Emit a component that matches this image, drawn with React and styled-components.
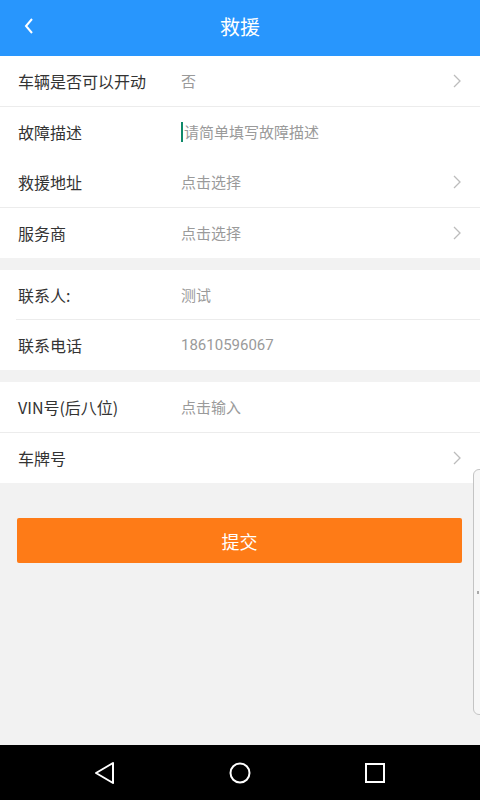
import styled, { createGlobalStyle } from "styled-components";

const Global = createGlobalStyle`
  html, body { margin: 0; padding: 0; }
  body { font-family: "Noto Sans CJK SC", "Noto Sans", sans-serif; }
  * { box-sizing: border-box; }
`;

const Screen = styled.div`
  width: 480px;
  height: 800px;
  display: flex;
  flex-direction: column;
  background: #f2f2f2;
  position: relative;
  overflow: hidden;
`;

const Header = styled.header`
  height: 56px;
  padding-bottom: 4px;
  background: #2896fd;
  display: flex;
  align-items: center;
  justify-content: center;
  position: relative;
  color: #fff;
  font-size: 20px;
`;

const Back = styled.div`
  position: absolute;
  left: 23px;
  top: 16px;
  width: 16px;
  height: 20px;
  display: flex;
  align-items: center;
`;

const Body = styled.main`
  flex: 1;
  display: flex;
  flex-direction: column;
`;

const Group = styled.section`
  background: #fff;
  margin-bottom: ${(p) => (p.$last ? "0" : "12px")};
`;

const Row = styled.div`
  box-sizing: content-box;
  height: 50px;
  display: flex;
  align-items: center;
  padding: 0 18px;
  position: relative;
  border-bottom: ${(p) => (p.$line ? "1px solid #ececec" : "none")};
  ${(p) =>
    p.$inset &&
    `&:after { content: ""; position: absolute; left: 16px; right: 0; bottom: 0; height: 1px; background: #ececec; }`}
`;

const Label = styled.div`
  width: 163px;
  font-size: 16px;
  color: #333;
  padding-bottom: 1px;
`;

const Value = styled.div`
  flex: 1;
  font-family: Roboto, "Noto Sans CJK SC", sans-serif;
  font-size: 15px;
  color: #9a9a9a;
  display: flex;
  align-items: center;
  padding-bottom: 1px;
`;

const Caret = styled.span`
  display: inline-block;
  width: 2px;
  height: 20px;
  background: #108a6a;
  margin-right: 1px;
`;

const Arrow = styled.div`
  width: 10px;
  display: flex;
  justify-content: center;
`;

const Submit = styled.button`
  margin: 35px 18px 0 17px;
  height: 45px;
  border: none;
  border-radius: 2px;
  background: #fe7b17;
  color: #fff;
  font-size: 18px;
  font-family: inherit;
`;

const NavBar = styled.nav`
  height: 55px;
  background: #000;
  display: flex;
  align-items: center;
  justify-content: center;
  gap: 112px;
`;

const SideHandle = styled.div`
  position: absolute;
  right: -5px;
  top: 469px;
  width: 12px;
  height: 246px;
  border: 1px solid #c4c4c4;
  border-radius: 6px 0 0 6px;
  background: #f7f7f7;
  &:after {
    content: "";
    position: absolute;
    left: 3px;
    top: 121px;
    width: 2px;
    height: 3px;
    background: #aaa;
  }
`;

const Chevron = () => (
  <svg width="8" height="14" viewBox="0 0 8 14">
    <path d="M1 1l6 6-6 6" fill="none" stroke="#bcbcbc" strokeWidth="1.3" />
  </svg>
);

function App() {
  return (
    <Screen>
      <Global />
      <Header>
        <Back>
          <svg width="12" height="18" viewBox="0 0 12 18">
            <path d="M9 2L3 9l6 7" fill="none" stroke="#fff" strokeWidth="2" />
          </svg>
        </Back>
        救援
      </Header>
      <Body>
        <Group>
          <Row $line>
            <Label>车辆是否可以开动</Label>
            <Value>否</Value>
            <Arrow><Chevron /></Arrow>
          </Row>
          <Row>
            <Label>故障描述</Label>
            <Value><Caret />请简单填写故障描述</Value>
          </Row>
          <Row $line>
            <Label>救援地址</Label>
            <Value>点击选择</Value>
            <Arrow><Chevron /></Arrow>
          </Row>
          <Row>
            <Label>服务商</Label>
            <Value>点击选择</Value>
            <Arrow><Chevron /></Arrow>
          </Row>
        </Group>
        <Group>
          <Row $inset>
            <Label>联系人:</Label>
            <Value>测试</Value>
          </Row>
          <Row>
            <Label>联系电话</Label>
            <Value>18610596067</Value>
          </Row>
        </Group>
        <Group $last>
          <Row $line>
            <Label>VIN号(后八位)</Label>
            <Value>点击输入</Value>
          </Row>
          <Row>
            <Label>车牌号</Label>
            <Value></Value>
            <Arrow><Chevron /></Arrow>
          </Row>
        </Group>
        <Submit>提交</Submit>
      </Body>
      <NavBar>
        <svg width="22" height="24" viewBox="0 0 22 24">
          <path d="M19 2L2 12l17 10z" fill="none" stroke="#fff" strokeWidth="2" strokeLinejoin="round" />
        </svg>
        <svg width="24" height="24" viewBox="0 0 24 24">
          <circle cx="12" cy="12" r="9.5" fill="none" stroke="#fff" strokeWidth="2" />
        </svg>
        <svg width="22" height="22" viewBox="0 0 22 22">
          <rect x="2" y="2" width="18" height="18" fill="none" stroke="#fff" strokeWidth="2" />
        </svg>
      </NavBar>
      <SideHandle />
    </Screen>
  );
}

export default App;
